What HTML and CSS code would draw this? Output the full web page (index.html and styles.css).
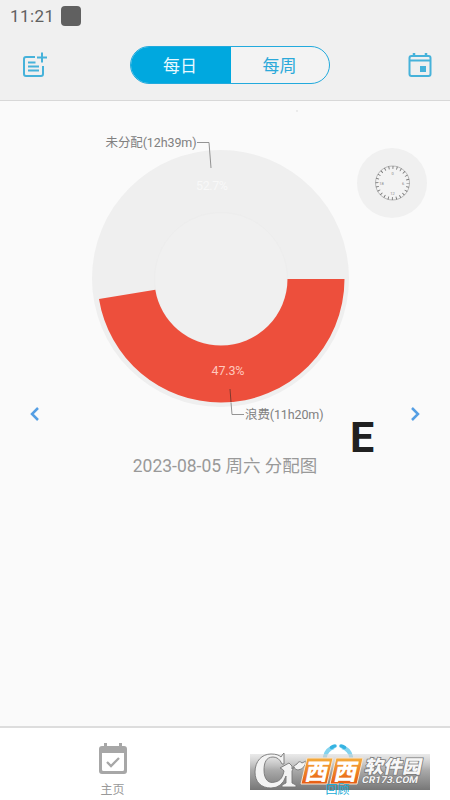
FILE: index.html
```html
<!DOCTYPE html>
<html lang="zh-CN">
<head>
<meta charset="utf-8">
<title>回顾</title>
<link rel="stylesheet" href="styles.css">
</head>
<body>
<div class="app">
  <header class="header">
    <div class="status"><span>11:21</span><i class="status-square"></i></div>
    <div class="toolbar">
      <svg class="icon" width="28" height="28" viewBox="0 0 28 28" fill="none" stroke="#46b2da" stroke-width="2">
        <path d="M15 5H6Q4 5 4 7v15q0 2 2 2h15q2 0 2-2V14M8 10.500h7.500M8 14.500H19M8 18.500H19M17 5.500h10M22 .5v10"/>
      </svg>
      <div class="tabs"><div class="tab active">每日</div><div class="tab">每周</div></div>
      <svg class="icon" width="28" height="28" viewBox="0 0 28 28" fill="none" stroke="#46b2da" stroke-width="2">
        <rect x="3.500" y="4" width="21" height="20" rx="2"/><path d="M4 8.500h20" stroke-width="2"/><path d="M8 1v3M20 1v3" stroke-width="2.500"/><rect x="14" y="14" width="6" height="6" fill="#46b2da" stroke="none"/>
      </svg>
    </div>
  </header>
  <main class="main">
    <svg class="chart" width="450" height="320" viewBox="0 101 450 320">
      <path d="M296 111h2" stroke="#ddd"/>
      <circle cx="220.500" cy="278.500" r="128.500" fill="#efefef"/>
      <circle cx="221" cy="279" r="66.500" fill="#f0f0f0" stroke="#ededed"/>
      <path d="M344.500 279A123.500 123.500 0 0 1 221 402.500A123.500 123.500 0 0 1 98.970 298.960L155.290 289.750A66.500 66.500 0 0 0 221 345.500A66.500 66.500 0 0 0 287.500 279Z" fill="#ed4f3c"/>
      <g fill="none" stroke="#888" stroke-width=".9"><path d="M197 142.500h12l2 25.500"/><path d="M244 414.500h-12l-1-12"/><path d="M231 402l-1-13" stroke="#74352b"/></g>
      <g class="chart-label"><text x="105.500" y="147" textLength="91">未分配(12h39m)</text><text x="245" y="418.500" textLength="78.500">浪费(11h20m)</text></g>
      <text class="percent faint" x="196" y="190" textLength="32">52.7%</text>
      <text class="percent" x="211.500" y="375" textLength="33">47.3%</text>
      <circle cx="392" cy="183" r="35" fill="#f0f0f0"/>
      <circle cx="392.500" cy="183" r="17" fill="#f3f3f3" stroke="#aaa" stroke-width=".8"/>
      <circle cx="392.500" cy="183" r="15.500" fill="none" stroke="#777" stroke-width="3" stroke-dasharray=".9 3.158" stroke-dashoffset=".45"/>
      <g class="dial"><text x="392.500" y="174.500">0</text><text x="403" y="184.500">6</text><text x="392.500" y="195">12</text><text x="381.500" y="184.500">18</text></g>
    </svg>
    <div class="navigator">
      <svg width="10" height="16" viewBox="0 0 10 16"><path d="M8 2L2 8l6 6" fill="none" stroke="#559fe4" stroke-width="2.500"/></svg>
      <svg width="10" height="16" viewBox="0 0 10 16"><path d="M2 2l6 6-6 6" fill="none" stroke="#559fe4" stroke-width="2.500"/></svg>
    </div>
    <div class="caption">2023-08-05 周六 分配图</div>
    <div class="letter">E</div>
  </main>
  <footer class="footer">
    <div class="nav-item">
      <svg width="30" height="34" viewBox="0 0 30 34"><path d="M4 4h22q3 0 3 3v22q0 3-3 3H4q-3 0-3-3V7q0-3 3-3ZM4 11v16.500q0 1.500 1.500 1.500h19q1.500 0 1.500-1.500V11Z" fill="#a7a7a7" fill-rule="evenodd"/><path d="M6 1h3v4H6zM21 1h3v4h-3z" fill="#a7a7a7"/><path d="M9 20l4 4 8-8" fill="none" stroke="#a7a7a7" stroke-width="2.300"/></svg>
      <span>主页</span>
    </div>
    <div class="nav-item selected">
      <svg width="30" height="34" viewBox="0 0 30 34"><path d="M11 5A13 13 0 0 0 7 28M19 5A13 13 0 0 1 23 28" fill="none" stroke="#83d3ee" stroke-width="4"/><path d="M8.500 5.500q2-1.500 3.500-1.500M21.500 5.500Q19.500 4 18 4" fill="none" stroke="#35b3e2" stroke-width="3.500" stroke-linecap="round"/></svg>
      <span>回顾</span>
    </div>
    <svg class="watermark" width="180" height="46" viewBox="250 750 180 46">
      <defs>
        <linearGradient id="strip" x2="0" y2="1"><stop stop-color="#d8d8d8" stop-opacity=".55"/><stop offset=".45" stop-color="#aaa"/><stop offset="1" stop-color="#777"/></linearGradient>
        <linearGradient id="orange" x2="0" y2="1"><stop stop-color="#f5ac3b"/><stop offset="1" stop-color="#e75b13"/></linearGradient>
      </defs>
      <path d="M250 754h180v36H250z" fill="url(#strip)"/>
      <path d="M284 753v11h-2q-3-7-9-7c-7 0-9 6-9 13 0 10 5 14 11 12 6-1 8-6 9-11q-1-2-4-3l9-5 3 3v3q2-4 5-5 2-4 5-1l4-2q-1 8-8 9-3 0-4-3l-2 4v12l4 2v2h-14v-2l4-2v-7q-4 12-15 12c-10 0-16-6-16-16 0-11 7-18 16-18 5 0 8 1 10 3l2-3Z" fill="#f3f3f3" stroke="#777" stroke-width=".9" stroke-linejoin="round"/>
      <path d="M307 758h26l-6 26h-26zM336 758h27l-6 26h-27z" fill="url(#orange)" stroke="#f7e5d0"/>
      <g class="brand"><text transform="translate(304 779.500) skewX(-12)" textLength="23" lengthAdjust="spacingAndGlyphs">西</text><text transform="translate(333 779.500) skewX(-12)" textLength="23" lengthAdjust="spacingAndGlyphs">西</text></g>
      <text class="software" transform="translate(364 772.500) skewX(-12)" textLength="57" lengthAdjust="spacingAndGlyphs">软件园</text>
      <text class="domain" transform="translate(361.500 783) skewX(-12)" textLength="56" lengthAdjust="spacingAndGlyphs">CR173.COM</text>
    </svg>
  </footer>
</div>
</body>
</html>
```

FILE: styles.css
```css
* { box-sizing: border-box; }
body { margin: 0; font-family: Roboto, "Noto Sans CJK SC", sans-serif; background: #fafafa; }
.app { width: 450px; height: 800px; display: flex; flex-direction: column; overflow: hidden; position: relative; }
.header { height: 101px; background: #f0f0f0; border-bottom: 1px solid #d8d8d8; }
.status { height: 31px; display: flex; align-items: center; gap: 7px; padding-left: 10px; color: #606060; font-size: 17px; letter-spacing: .4px; }
.status-square { width: 20px; height: 20px; border-radius: 4px; background: #606060; }
.toolbar { height: 68px; padding: 0 16px 0 20px; display: flex; align-items: center; justify-content: space-between; }
.icon { display: block; margin-top: 2px; }
.tabs { width: 200px; height: 38px; background: #f3f3f3; border: 1.500px solid #22aadd; border-radius: 19px; display: flex; overflow: hidden; margin-right: 12px; margin-left: 18px; }
.tab { flex: 1; display: flex; align-items: center; justify-content: center; color: #2ba9da; font-size: 17px; padding: 0 1px 2px 0; }
.active { background: #00a8df; color: #e8f9ff; flex: 0 0 100px; padding-right: 2px; }
.main { flex: 1; display: flex; flex-direction: column; background: #fafafa; }
.chart { display: block; height: 320px; overflow: visible; flex-shrink: 0; margin-bottom: -15px; }
.chart-label { font-size: 12.500px; fill: #808080; }
.percent { font-size: 12.500px; fill: #ffc8bd; }
.faint { fill: #f8f8f8; }
.dial { font-size: 4px; fill: #888; text-anchor: middle; }
.navigator { display: flex; justify-content: space-between; padding: 0 30px; height: 16px; }
.caption { margin-top: 30px; height: 28px; line-height: 28px; text-align: center; color: #999; font-size: 17.500px; }
.letter { position: absolute; left: 350px; top: 411px; font: 700 43px/52px Roboto, sans-serif; color: #202020; }
.footer { height: 74px; background: #fff; border-top: 2px solid #ddd; display: flex; position: relative; }
.nav-item { flex: 1; display: flex; flex-direction: column; align-items: center; padding-top: 14px; color: #999; font-size: 12px; line-height: 16px; }
.nav-item span { margin-top: 6px; }
.selected { color: #22acd6; }
.selected span { position: relative; z-index: 3; }
.watermark { position: absolute; left: 250px; top: 22px; z-index: 2; }
.brand { font: 900 23px "Noto Sans CJK SC", sans-serif; fill: #fff; }
.software { font: 900 18px "Noto Sans CJK SC", sans-serif; fill: #f7f7f7; stroke: #777; stroke-width: 1.500px; paint-order: stroke; }
.domain { font: 700 9.500px Roboto, sans-serif; fill: #f5f5f5; stroke: #777; stroke-width: 1.200px; paint-order: stroke; }
```
